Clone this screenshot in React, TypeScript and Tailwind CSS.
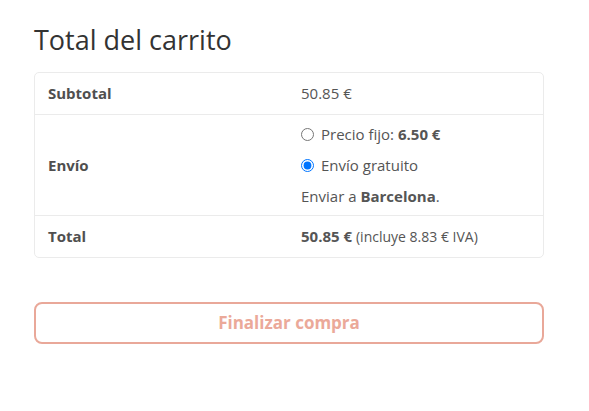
import React from "react";

export default function App() {
  return (
    <div className="w-[589px] h-[411px] bg-white" style={{ fontFamily: '"Open Sans", sans-serif' }}>
      <div className="pl-[34px] pt-[22px] w-[544px]">
        <h2 className="text-[27px] leading-[36px] text-[#333] font-normal">Total del carrito</h2>
        <div className="mt-[14px] border border-[#ebebeb] rounded-[5px] text-[15px] text-[#555]">
          <div className="grid grid-cols-[266px_1fr] h-[42px] items-center border-b border-[#ebebeb]">
            <div className="pl-[13px] font-bold text-[#4f4f4f]">Subtotal</div>
            <div>50.85 €</div>
          </div>
          <div className="grid grid-cols-[266px_1fr] h-[101px] items-center border-b border-[#ebebeb]">
            <div className="pl-[13px] font-bold text-[#4f4f4f]">Envío</div>
            <div className="flex flex-col pt-[1px]">
              <label className="flex items-center h-[31px]">
                <input type="radio" name="ship" className="m-0 mr-[7px] w-[13px] h-[13px]" />
                <span>Precio fijo: <b>6.50 €</b></span>
              </label>
              <label className="flex items-center h-[31px]">
                <input type="radio" name="ship" defaultChecked className="m-0 mr-[7px] w-[13px] h-[13px]" />
                <span>Envío gratuito</span>
              </label>
              <div className="h-[31px] flex items-center">
                <span>Enviar a <b>Barcelona</b>.</span>
              </div>
            </div>
          </div>
          <div className="grid grid-cols-[266px_1fr] h-[41px] items-center">
            <div className="pl-[13px] font-bold text-[#4f4f4f]">Total</div>
            <div>
              <b>50.85 €</b> <span className="text-[14px]">(incluye 8.83 € IVA)</span>
            </div>
          </div>
        </div>
        <button className="mt-[44px] w-full h-[42px] border-2 border-[#e9a899] rounded-[8px] text-[17px] font-bold text-[#eba999] bg-white">
          Finalizar compra
        </button>
      </div>
    </div>
  );
}
